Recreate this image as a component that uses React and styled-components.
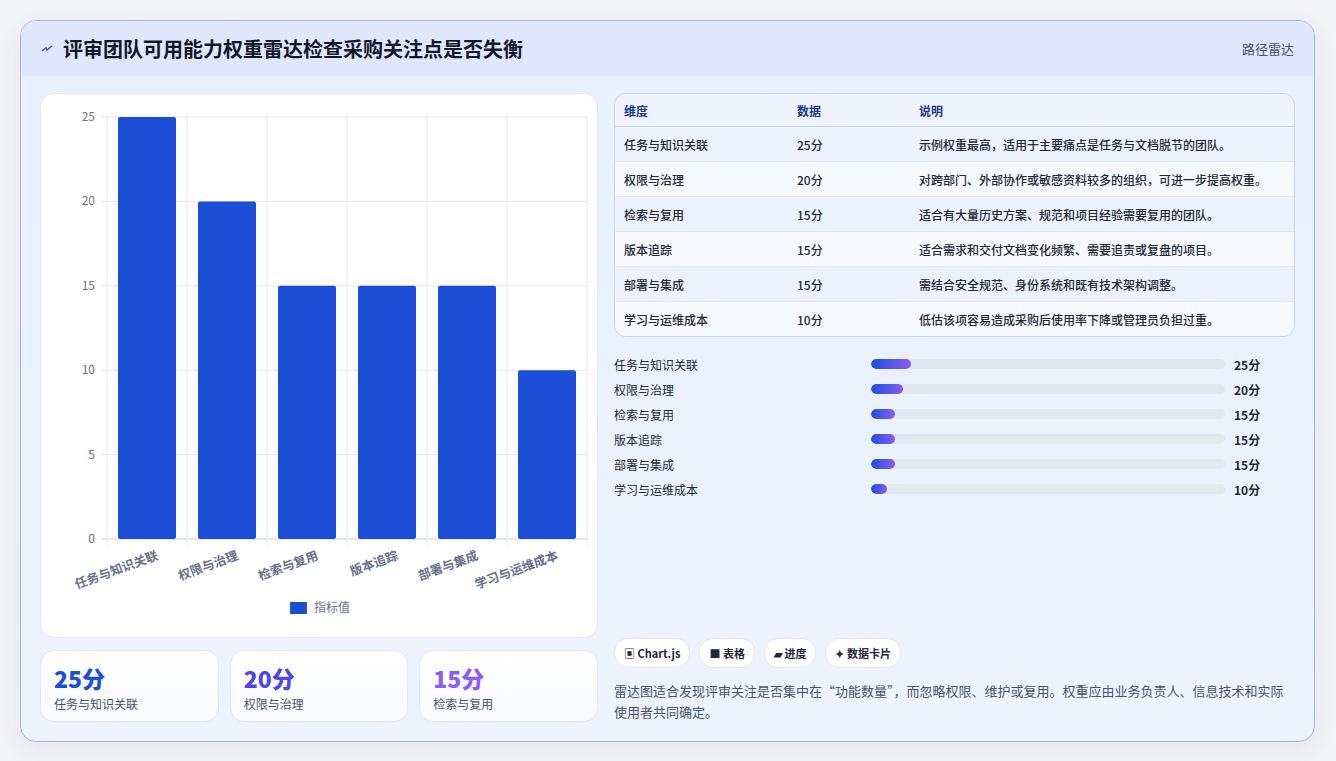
import styled, { createGlobalStyle } from "styled-components";

const GlobalStyle = createGlobalStyle`
  body {
    margin: 0;
    background: #f3f4f6;
    font-family: "Noto Sans CJK SC", "Noto Sans", sans-serif;
  }
`;

const data = [
  { name: "任务与知识关联", value: 25, note: "示例权重最高，适用于主要痛点是任务与文档脱节的团队。" },
  { name: "权限与治理", value: 20, note: "对跨部门、外部协作或敏感资料较多的组织，可进一步提高权重。" },
  { name: "检索与复用", value: 15, note: "适合有大量历史方案、规范和项目经验需要复用的团队。" },
  { name: "版本追踪", value: 15, note: "适合需求和交付文档变化频繁、需要追责或复盘的项目。" },
  { name: "部署与集成", value: 15, note: "需结合安全规范、身份系统和既有技术架构调整。" },
  { name: "学习与运维成本", value: 10, note: "低估该项容易造成采购后使用率下降或管理员负担过重。" },
];

const Page = styled.div`
  padding: 20px 21px 21px 20px;
`;

const Frame = styled.div`
  border: 1px solid #a5b4e8;
  border-radius: 16px;
  overflow: hidden;
  background: linear-gradient(180deg, #e8effd 0%, #edf4ff 100%);
  box-shadow: 0 8px 24px rgba(30, 58, 138, 0.08);
`;

const Header = styled.div`
  height: 55px;
  display: flex;
  align-items: center;
  justify-content: space-between;
  padding: 0 20px;
  background: #dfe7fd;
`;

const Title = styled.h1`
  margin: 0;
  display: flex;
  align-items: center;
  gap: 10px;
  font-size: 20px;
  font-weight: 700;
  color: #111827;
`;

const Tag = styled.span`
  font-size: 13px;
  color: #475569;
`;

const Body = styled.div`
  display: grid;
  grid-template-columns: 558px 1fr;
  gap: 16px;
  padding: 17px 19px 19px 19px;
`;

const Column = styled.div`
  display: flex;
  flex-direction: column;
  gap: 12px;
`;

const ChartCard = styled.div`
  height: 543px;
  background: #fff;
  border: 1px solid #e2e8f0;
  border-radius: 14px;
  overflow: hidden;
`;

const Stats = styled.div`
  display: grid;
  grid-template-columns: repeat(3, 1fr);
  gap: 11px;
`;

const StatCard = styled.div`
  height: 72px;
  box-sizing: border-box;
  padding: 12px 13px;
  background: linear-gradient(180deg, #fff 0%, #f8fbff 100%);
  border: 1px solid #e2e8f0;
  border-radius: 14px;
`;

const StatNum = styled.div`
  font-size: 23px;
  font-weight: 800;
  line-height: 30px;
  color: ${(p) => p.$color};
`;

const StatLabel = styled.div`
  font-size: 12px;
  color: #475569;
  margin-top: 2px;
`;

const Table = styled.table`
  width: 100%;
  border-collapse: separate;
  border-spacing: 0;
  border: 1px solid #cbd5e1;
  border-radius: 12px;
  overflow: hidden;
  font-size: 12px;
`;

const Th = styled.th`
  text-align: left;
  font-weight: 600;
  color: #1e3a8a;
  background: #eef3fd;
  height: 32px;
  padding: 0 9px;
  border-bottom: 1px solid #cbd5e1;
  width: ${(p) => p.$w || "auto"};
`;

const Tr = styled.tr`
  background: ${(p) => (p.$odd ? "#f5f8fd" : "#ecf1fe")};
`;

const Td = styled.td`
  height: 34px;
  padding: 0 9px;
  color: #1f2937;
  font-weight: 500;
  border-top: ${(p) => (p.$first ? "none" : "1px solid #e2e8f0")};
`;

const Bars = styled.div`
  display: flex;
  flex-direction: column;
  gap: 7px;
  padding: 6px 0 0;
`;

const BarRow = styled.div`
  display: grid;
  grid-template-columns: 257px 354px 1fr;
  align-items: center;
  gap: 0;
  height: 18px;
  font-size: 12px;
  color: #1f2937;
`;

const Track = styled.div`
  height: 10px;
  border-radius: 5px;
  background: #e2e8f0;
  overflow: hidden;
`;

const Fill = styled.div`
  height: 100%;
  border-radius: 5px;
  background: linear-gradient(90deg, #1d4ed8, #8b5cf6);
`;

const BarValue = styled.span`
  font-weight: 700;
  padding-left: 9px;
`;

const Footer = styled.div`
  margin-top: auto;
  display: flex;
  flex-direction: column;
  gap: 12px;
`;

const Chips = styled.div`
  display: flex;
  gap: 9px;
`;

const Chip = styled.span`
  display: inline-flex;
  align-items: center;
  gap: 4px;
  height: 28px;
  padding: 0 9px;
  border-radius: 14px;
  background: #fff;
  border: 1px solid #e5e7eb;
  font-size: 11px;
  font-weight: 600;
  color: #1f2937;
`;

const Note = styled.p`
  margin: 0;
  font-size: 13px;
  line-height: 21px;
  color: #475569;
`;

function BarChart() {
  const left = 66;
  const top = 23;
  const bottom = 445;
  const step = 80;
  const h = bottom - top;
  return (
    <svg width="558" height="543" style={{ fontFamily: "Noto Sans CJK SC, sans-serif" }}>
      {[0, 5, 10, 15, 20, 25].map((t) => {
        const y = bottom - (t / 25) * h;
        return (
          <g key={t}>
            <line x1={left - 6} x2={546} y1={y} y2={y} stroke={t === 0 ? "#cbd5e1" : "#e5e7eb"} />
            <text x={left - 12} y={y + 4} fontSize="12" fill="#6b7280" textAnchor="end">{t}</text>
          </g>
        );
      })}
      {[0, 1, 2, 3, 4, 5, 6].map((i) => (
        <line key={i} x1={left + i * step} x2={left + i * step} y1={top} y2={bottom + 6} stroke="#e5e7eb" />
      ))}
      {data.map((d, i) => {
        const bh = (d.value / 25) * h;
        const cx = left + i * step + step / 2;
        return (
          <g key={d.name}>
            <rect x={cx - 29} y={bottom - bh} width="58" height={bh} rx="2" fill="#1d4ed8" />
            <text
              x={cx + 12}
              y={bottom + 20}
              fontSize="12.5"
              fontWeight="600"
              fill="#64748b"
              textAnchor="end"
              transform={`rotate(-20 ${cx + 12} ${bottom + 20})`}
            >
              {d.name}
            </text>
          </g>
        );
      })}
      <rect x="249" y="508" width="17" height="12" fill="#1d4ed8" />
      <text x="273" y="518" fontSize="12" fill="#64748b">指标值</text>
    </svg>
  );
}

export default function App() {
  return (
    <Page>
      <GlobalStyle />
      <Frame>
        <Header>
          <Title>
            <svg width="12" height="10" viewBox="0 0 12 10">
              <path d="M1 7 L5 4 L6 6 L11 2" stroke="#3b5bdb" strokeWidth="1.5" fill="none" />
            </svg>
            评审团队可用能力权重雷达检查采购关注点是否失衡
          </Title>
          <Tag>路径雷达</Tag>
        </Header>
        <Body>
          <Column>
            <ChartCard>
              <BarChart />
            </ChartCard>
            <Stats>
              <StatCard>
                <StatNum $color="#1d4ed8">25分</StatNum>
                <StatLabel>任务与知识关联</StatLabel>
              </StatCard>
              <StatCard>
                <StatNum $color="#4f46e5">20分</StatNum>
                <StatLabel>权限与治理</StatLabel>
              </StatCard>
              <StatCard>
                <StatNum $color="#8b5cf6">15分</StatNum>
                <StatLabel>检索与复用</StatLabel>
              </StatCard>
            </Stats>
          </Column>
          <Column>
            <Table>
              <thead>
                <tr>
                  <Th $w="155px">维度</Th>
                  <Th $w="104px">数据</Th>
                  <Th>说明</Th>
                </tr>
              </thead>
              <tbody>
                {data.map((d, i) => (
                  <Tr key={d.name} $odd={i % 2 === 1}>
                    <Td $first={i === 0}>{d.name}</Td>
                    <Td $first={i === 0}>{d.value}分</Td>
                    <Td $first={i === 0}>{d.note}</Td>
                  </Tr>
                ))}
              </tbody>
            </Table>
            <Bars>
              {data.map((d) => (
                <BarRow key={d.name}>
                  <span>{d.name}</span>
                  <Track>
                    <Fill style={{ width: `${d.value * 0.45}%` }} />
                  </Track>
                  <BarValue>{d.value}分</BarValue>
                </BarRow>
              ))}
            </Bars>
            <Footer>
              <Chips>
                <Chip>▣ Chart.js</Chip>
                <Chip>■ 表格</Chip>
                <Chip>▰ 进度</Chip>
                <Chip>✦ 数据卡片</Chip>
              </Chips>
              <Note>
                雷达图适合发现评审关注是否集中在“功能数量”，而忽略权限、维护或复用。权重应由业务负责人、信息技术和实际使用者共同确定。
              </Note>
            </Footer>
          </Column>
        </Body>
      </Frame>
    </Page>
  );
}
